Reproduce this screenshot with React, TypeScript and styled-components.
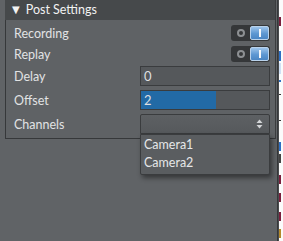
import styled, { createGlobalStyle } from "styled-components";

const GlobalStyle = createGlobalStyle`
  html, body {
    margin: 0;
    padding: 0;
    background: #606366;
    font-family: "Lato", "Noto Sans", sans-serif;
  }
`;

// fragments of the page lying behind the dock, cut by the window edge
const marks = [
  { top: 17, h: 9, color: "#7a1f3d" },
  { top: 51, h: 10, color: "#2d6fc4" },
  { top: 63, h: 11, color: "#cfe0f5" },
  { top: 80, h: 2, color: "#2d6fc4" },
  { top: 94, h: 1, color: "#333" },
  { top: 120, h: 1, color: "#333" },
  { top: 142, h: 9, color: "#2d6fc4" },
  { top: 154, h: 9, color: "#444" },
  { top: 175, h: 9, color: "#7a1f3d" },
  { top: 193, h: 9, color: "#7a1f3d" },
  { top: 212, h: 9, color: "#7a1f3d" },
  { top: 229, h: 9, color: "#b3892a" },
];

const App = () => {
  return (
    <SWindow>
      <GlobalStyle />
      <SDock>
        <SPanel>
          <SHeader>
            <span className="arrow">▼</span>
            Post Settings
          </SHeader>
          <SBody>
            <SRow $h={16}>
              <SLabel>Recording</SLabel>
              <Switch />
            </SRow>
            <SRow $h={16}>
              <SLabel>Replay</SLabel>
              <Switch />
            </SRow>
            <SRow $h={20}>
              <SLabel>Delay</SLabel>
              <SInput>
                <span>0</span>
              </SInput>
            </SRow>
            <SRow $h={20}>
              <SLabel>Offset</SLabel>
              <SInput>
                <SFill style={{ width: `${(2 / 3.4) * 100}%` }} />
                <span>2</span>
              </SInput>
            </SRow>
            <SRow $h={20}>
              <SLabel>Channels</SLabel>
              <SSelect>
                <svg width="7" height="10" viewBox="0 0 7 10">
                  <path d="M3.5 0.5 L6.5 4 L0.5 4 Z" fill="#d4d6d8" />
                  <path d="M3.5 9.5 L6.5 6 L0.5 6 Z" fill="#d4d6d8" />
                </svg>
                <SMenu>
                  <SOption>Camera1</SOption>
                  <SOption>Camera2</SOption>
                </SMenu>
              </SSelect>
            </SRow>
          </SBody>
        </SPanel>
      </SDock>
      <SPage>
        {marks.map((m, i) => (
          <SMark key={i} style={{ top: m.top, height: m.h, background: m.color }} />
        ))}
      </SPage>
    </SWindow>
  );
};

const Switch = () => (
  <SSwitch>
    <SDot />
    <SKnob>
      <span />
    </SKnob>
  </SSwitch>
);

export default App;

const SWindow = styled.div`
  display: flex;
  width: 283px;
  height: 241px;
  overflow: hidden;
`;
const SDock = styled.div`
  width: 278px;
  padding-left: 5px;
  box-sizing: border-box;
  background: #606366;
  border-right: 1px solid #36383a;
`;
const SPanel = styled.div`
  width: 271px;
  border-right: 1px solid #3a3c3e;
  box-sizing: border-box;
`;
const SHeader = styled.div`
  height: 20px;
  background: #46494b;
  color: #f2f2f2;
  font-size: 12.5px;
  line-height: 20px;
  padding-left: 7px;
  display: flex;
  align-items: center;
  & .arrow {
    font-size: 10px;
    margin-right: 6px;
    font-family: "DejaVu Sans", sans-serif;
  }
`;
const SBody = styled.div`
  display: flex;
  flex-direction: column;
  padding: 5px 5px 4px 8px;
  border-left: 1px solid #36383a;
  border-bottom: 1px solid #36383a;
  background: #5f6265;
  & > div:nth-child(2) {
    margin-top: 5px;
  }
  & > div:nth-child(n + 3) {
    margin-top: 4px;
  }
`;
const SRow = styled.div<{ $h: number }>`
  display: flex;
  align-items: center;
  justify-content: space-between;
  height: ${({ $h }) => $h}px;
  position: relative;
`;
const SLabel = styled.div`
  color: #e2e3e4;
  font-size: 12.5px;
`;
const SSwitch = styled.div`
  width: 39px;
  height: 16px;
  background: #353739;
  border-radius: 3px;
  display: flex;
  align-items: center;
  justify-content: space-between;
  padding: 0 1px 0 6px;
  box-sizing: border-box;
`;
const SDot = styled.div`
  width: 4px;
  height: 4px;
  border: 2px solid #8d9093;
  border-radius: 50%;
`;
const SKnob = styled.div`
  width: 19px;
  height: 14px;
  border-radius: 2px;
  background: linear-gradient(#9cc3ea, #5d97d2 55%, #4b86c4);
  border: 1px solid #b9d2ec;
  box-sizing: border-box;
  display: flex;
  align-items: center;
  justify-content: center;
  & > span {
    width: 2px;
    height: 8px;
    background: #f4f7fb;
  }
`;
const SInput = styled.div`
  position: relative;
  width: 130px;
  height: 20px;
  box-sizing: border-box;
  background: #55585b;
  border: 1px solid #3a3c3e;
  color: #dedfe0;
  font-size: 13px;
  line-height: 18px;
  padding-left: 3px;
  overflow: hidden;
  & > span {
    position: relative;
  }
`;
const SFill = styled.div`
  position: absolute;
  left: 0;
  top: 0;
  bottom: 0;
  background: #226aa6;
`;
const SSelect = styled.div`
  position: relative;
  width: 130px;
  height: 20px;
  box-sizing: border-box;
  background: linear-gradient(#5d6063, #56595c);
  border: 1px solid #3a3c3e;
  border-radius: 2px 2px 0 0;
  display: flex;
  align-items: center;
  justify-content: flex-end;
  padding-right: 6px;
`;
const SMenu = styled.div`
  position: absolute;
  left: -1px;
  top: 19px;
  width: 130px;
  box-sizing: border-box;
  background: #5a5d60;
  border: 1px solid #3a3c3e;
  border-radius: 0 0 2px 2px;
  box-shadow: 2px 3px 5px rgba(0, 0, 0, 0.45);
  padding: 1px 0 2px;
  z-index: 2;
`;
const SOption = styled.div`
  height: 18px;
  line-height: 18px;
  padding-left: 3px;
  color: #e6e7e8;
  font-size: 12.5px;
`;
const SPage = styled.div`
  position: relative;
  flex: 1;
  background: #fbfbfb;
  border-left: 1px solid #4a4c4e;
`;
const SMark = styled.div`
  position: absolute;
  left: 0;
  width: 2px;
`;
